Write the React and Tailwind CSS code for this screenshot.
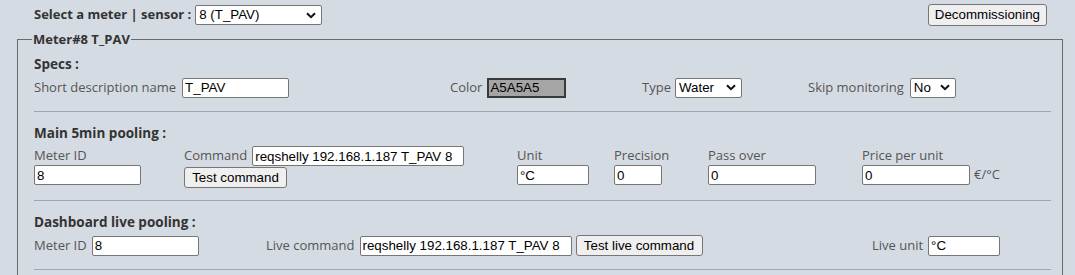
// App.jsx
import React from 'react';

const inp =
  'h-[20px] bg-white border border-[#767676] rounded-[2px] px-[2px] text-[13.33px] text-black font-["Liberation_Sans",Arial,sans-serif] outline-none';
const btn =
  'h-[21px] bg-[#efefef] border border-[#767676] rounded-[3px] px-[6px] text-[13.33px] text-black font-["Liberation_Sans",Arial,sans-serif] leading-none whitespace-nowrap';
const sel =
  'h-[20px] bg-white border border-[#767676] rounded-[2px] pl-[3px] text-[13.33px] text-black font-["Liberation_Sans",Arial,sans-serif] flex items-center justify-between';

const Chevron = () => (
  <svg width="10" height="7" viewBox="0 0 10 7" className="mr-[5px]">
    <path d="M1 1.2 L5 5.2 L9 1.2" stroke="#111" strokeWidth="2" fill="none" />
  </svg>
);

const Select = ({ value, width }) => (
  <div className={sel} style={{ width }}>
    <span>{value}</span>
    <Chevron />
  </div>
);

const Label = ({ children, className = '' }) => (
  <span className={'text-[13px] text-[#555] whitespace-nowrap ' + className}>{children}</span>
);

const App = () => {
  return (
    <div className='w-[1075px] h-[275px] overflow-hidden bg-[#d5dbe3] font-["Open_Sans",sans-serif] text-[#333] pl-[17px] pr-[12px]'>
      {/* top bar */}
      <div className="flex items-center justify-between h-[30px] pl-[17px] pr-[16px]">
        <div className="flex items-center gap-[4px]">
          <span className="text-[13px] font-bold text-[#333]">Select a meter | sensor :</span>
          <Select value="8 (T_PAV)" width={127} />
        </div>
        <button className={btn + ' h-[22px] px-[6px]'}>Decommissioning</button>
      </div>

      <fieldset className="border border-[#6a6a6a] pl-[16px] pr-[11px] pb-[20px] h-[260px]">
        <legend className="text-[13px] leading-[18px] font-bold text-[#333] px-[1px] ml-[-2px]">Meter#8 T_PAV</legend>

        {/* specs */}
        <div className="text-[13.5px] leading-[19.5px] font-bold mt-[7px]">Specs :</div>
        <div className="flex items-center h-[22px] mt-[2px]">
          <div className="flex items-center gap-[6px] w-[416px]">
            <Label>Short description name</Label>
            <input className={inp + ' w-[107px]'} defaultValue="T_PAV" />
          </div>
          <div className="flex items-center gap-[5px] w-[192px]">
            <Label>Color</Label>
            <input
              className="h-[20px] w-[79px] bg-[#a5a5a5] border-2 border-[#3a3a3a] px-[1px] text-[13.33px] text-black font-['Liberation_Sans',Arial,sans-serif] outline-none"
              defaultValue="A5A5A5"
            />
          </div>
          <div className="flex items-center gap-[4px] w-[166px]">
            <Label>Type</Label>
            <Select value="Water" width={67} />
          </div>
          <div className="flex items-center gap-[6px]">
            <Label>Skip monitoring</Label>
            <Select value="No" width={46} />
          </div>
        </div>
        <hr className="border-t border-[#a2a6ad] mt-[12px]" />

        {/* main pooling */}
        <div className="text-[13.5px] leading-[19.5px] font-bold mt-[12px]">Main 5min pooling :</div>
        <div className="flex items-start mt-[3px]">
          <div className="flex flex-col w-[150px]">
            <Label className="leading-[19px]">Meter ID</Label>
            <input className={inp + ' w-[107px]'} defaultValue="8" />
          </div>
          <div className="flex flex-col w-[333px]">
            <div className="flex items-center gap-[5px]">
              <Label>Command</Label>
              <input className={inp + ' w-[212px]'} defaultValue="reqshelly 192.168.1.187 T_PAV 8" />
            </div>
            <button className={btn + ' w-[103px] mt-[1px] px-0'}>Test command</button>
          </div>
          <div className="flex flex-col w-[97px]">
            <Label className="leading-[19px]">Unit</Label>
            <input className={inp + ' w-[72px]'} defaultValue="°C" />
          </div>
          <div className="flex flex-col w-[94px]">
            <Label className="leading-[19px]">Precision</Label>
            <input className={inp + ' w-[48px]'} defaultValue="0" />
          </div>
          <div className="flex flex-col w-[154px]">
            <Label className="leading-[19px]">Pass over</Label>
            <input className={inp + ' w-[108px]'} defaultValue="0" />
          </div>
          <div className="flex flex-col">
            <Label className="leading-[19px]">Price per unit</Label>
            <div className="flex items-center gap-[4px]">
              <input className={inp + ' w-[108px]'} defaultValue="0" />
              <Label>€/°C</Label>
            </div>
          </div>
        </div>
        <hr className="border-t border-[#a2a6ad] mt-[12px]" />

        {/* dashboard pooling */}
        <div className="text-[13.5px] leading-[19.5px] font-bold mt-[12px]">Dashboard live pooling :</div>
        <div className="flex items-center h-[22px] mt-[2px]">
          <div className="flex items-center gap-[5px] w-[232px]">
            <Label>Meter ID</Label>
            <input className={inp + ' w-[107px]'} defaultValue="8" />
          </div>
          <div className="flex items-center gap-[5px] w-[606px]">
            <Label>Live command</Label>
            <input className={inp + ' w-[212px]'} defaultValue="reqshelly 192.168.1.187 T_PAV 8" />
            <button className={btn + ' w-[127px] px-0 -ml-[1px]'}>Test live command</button>
          </div>
          <div className="flex items-center gap-[5px]">
            <Label>Live unit</Label>
            <input className={inp + ' w-[72px]'} defaultValue="°C" />
          </div>
        </div>
        <hr className="border-t border-[#a2a6ad] mt-[12px]" />
      </fieldset>
    </div>
  );
};

export default App;
